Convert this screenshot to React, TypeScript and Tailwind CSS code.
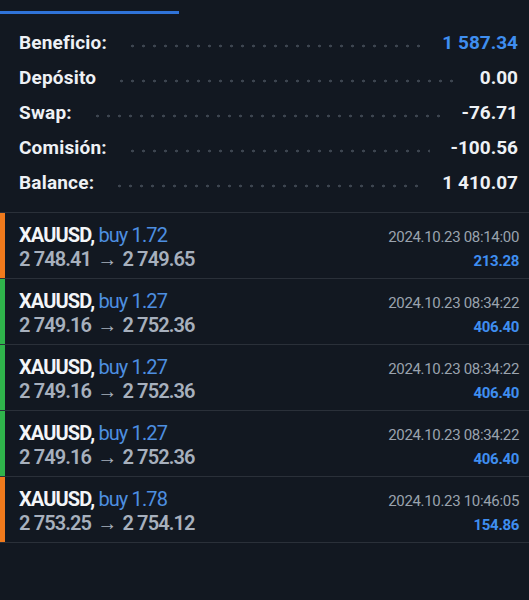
import React from 'react';

interface SummaryRow {
  label: string;
  value: string;
  accent?: boolean;
}

interface Deal {
  symbol: string;
  side: string;
  open: string;
  close: string;
  time: string;
  profit: string;
  color: 'orange' | 'green';
}

const summary: SummaryRow[] = [
  { label: 'Beneficio:', value: '1 587.34', accent: true },
  { label: 'Depósito', value: '0.00' },
  { label: 'Swap:', value: '-76.71' },
  { label: 'Comisión:', value: '-100.56' },
  { label: 'Balance:', value: '1 410.07' },
];

const deals: Deal[] = [
  { symbol: 'XAUUSD,', side: 'buy 1.72', open: '2 748.41', close: '2 749.65', time: '2024.10.23 08:14:00', profit: '213.28', color: 'orange' },
  { symbol: 'XAUUSD,', side: 'buy 1.27', open: '2 749.16', close: '2 752.36', time: '2024.10.23 08:34:22', profit: '406.40', color: 'green' },
  { symbol: 'XAUUSD,', side: 'buy 1.27', open: '2 749.16', close: '2 752.36', time: '2024.10.23 08:34:22', profit: '406.40', color: 'green' },
  { symbol: 'XAUUSD,', side: 'buy 1.27', open: '2 749.16', close: '2 752.36', time: '2024.10.23 08:34:22', profit: '406.40', color: 'green' },
  { symbol: 'XAUUSD,', side: 'buy 1.78', open: '2 753.25', close: '2 754.12', time: '2024.10.23 10:46:05', profit: '154.86', color: 'orange' },
];

const SummaryLine = ({ label, value, accent }: SummaryRow) => (
  <div className="flex h-[35px] items-center">
    <span className="text-[19px] font-bold tracking-[0.01em] text-[#eef1f5]">{label}</span>
    <div className="mx-[20px] mt-[4px] h-[4px] flex-1 bg-[radial-gradient(circle,#3d4550_1.1px,transparent_1.7px)] bg-[length:11px_4px] bg-repeat-x" />
    <span className={`text-[19px] font-bold ${accent ? 'text-[#3f8ef0]' : 'text-[#eef1f5]'}`}>{value}</span>
  </div>
);

const DealRow = ({ deal }: { deal: Deal }) => (
  <div className="flex h-[66px] border-b border-[#2a3039]">
    <div className={`w-[5px] ${deal.color === 'orange' ? 'bg-[#f07a1c]' : 'bg-[#2fb44b]'}`} />
    <div className="flex flex-1 items-start justify-between pl-[14px] pr-[10px] pt-[10px]">
      <div className="flex flex-col tracking-[-0.055em]">
        <div className="text-[20px] leading-[24px]">
          <span className="font-bold text-[#f3f5f8]">{deal.symbol}</span>{' '}
          <span className="text-[#4d8fe0]">{deal.side}</span>
        </div>
        <div className="text-[20px] leading-[24px] font-semibold text-[#a7b0bd]">
          {deal.open} <span className="mx-[2px]">→</span> {deal.close}
        </div>
      </div>
      <div className="flex flex-col items-end pt-[4px] tracking-[-0.02em]">
        <span className="text-[15px] leading-[20px] text-[#9aa3ae]">{deal.time}</span>
        <span className="mt-[4px] text-[15px] leading-[20px] font-bold text-[#3f8ef0]">{deal.profit}</span>
      </div>
    </div>
  </div>
);

const App = () => {
  return (
    <div className="h-[600px] w-[529px] bg-[#121821] font-['Roboto',sans-serif]">
      <div className="pt-[11px]">
        <div className="h-[3px] w-[179px] bg-[#2f73d8]" />
      </div>
      <div className="px-[19px] pr-[11px] pt-[12px] pb-[11px]">
        {summary.map((row) => (
          <SummaryLine key={row.label} {...row} />
        ))}
      </div>
      <div className="border-t border-[#2a3039]">
        {deals.map((deal, i) => (
          <DealRow key={i} deal={deal} />
        ))}
      </div>
    </div>
  );
};

export default App;
